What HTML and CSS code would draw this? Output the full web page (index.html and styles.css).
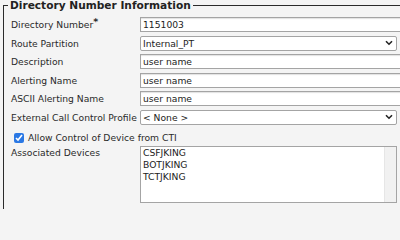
FILE: index.html
```html
<!DOCTYPE html>
<html>
<head>
<meta charset="utf-8">
<link rel="stylesheet" href="styles.css">
</head>
<body>
<fieldset class="panel">
  <legend class="panel-title">Directory Number Information</legend>
  <div class="form">
    <label class="lbl">Directory Number<sup class="req">*</sup></label>
    <input class="txt wide" type="text" value="1151003">

    <label class="lbl">Route Partition</label>
    <div class="sel-wrap">
      <select class="sel"><option>Internal_PT</option></select>
      <svg class="chev" width="8" height="6" viewBox="0 0 8 6"><path d="M1 1.2 L4 4.2 L7 1.2" fill="none" stroke="#222" stroke-width="1.6"/></svg>
    </div>

    <label class="lbl">Description</label>
    <input class="txt wide" type="text" value="user name">

    <label class="lbl">Alerting Name</label>
    <input class="txt wide" type="text" value="user name">

    <label class="lbl">ASCII Alerting Name</label>
    <input class="txt wide" type="text" value="user name">

    <label class="lbl">External Call Control Profile</label>
    <div class="sel-wrap">
      <select class="sel"><option>&lt; None &gt;</option></select>
      <svg class="chev" width="8" height="6" viewBox="0 0 8 6"><path d="M1 1.2 L4 4.2 L7 1.2" fill="none" stroke="#222" stroke-width="1.6"/></svg>
    </div>

    <label class="chk-row"><input class="chk" type="checkbox" checked>Allow Control of Device from CTI</label>

    <label class="lbl lbl-top">Associated Devices</label>
    <div class="listbox">
      <ul class="items">
        <li>CSFJKING</li>
        <li>BOTJKING</li>
        <li>TCTJKING</li>
      </ul>
      <div class="track"></div>
    </div>
  </div>
</fieldset>
</body>
</html>
```
FILE: styles.css
```css
html, body {
  margin: 0;
  padding: 0;
  background: #f4f4f4;
  overflow: hidden;
  width: 400px;
  height: 209px;
}
body {
  font-family: "DejaVu Sans", Verdana, sans-serif;
  font-size: 9.2px;
  color: #2a2a2a;
}
.panel {
  margin: 0 0 0 3px;
  padding: 0 0 0 4px;
  width: 397px;
  height: 209px;
  border: 1px solid #2b2b2b;
  border-right: none;
  border-bottom: none;
  border-radius: 0;
  box-sizing: border-box;
  overflow: hidden;
}
.panel-title {
  padding: 0 2px;
  font-weight: bold;
  font-size: 10.6px;
  line-height: 11px;
  color: #222;
}
.form {
  display: grid;
  grid-template-columns: 129px 1fr;
  row-gap: 3.6px;
  padding: 6px 0 0 3px;
  align-items: center;
}
.lbl {
  line-height: 15px;
  white-space: nowrap;
}
.req {
  font-weight: bold;
  font-size: 9.5px;
  line-height: 0;
  vertical-align: 3px;
}
.txt {
  height: 15px;
  box-sizing: border-box;
  margin: 0;
  padding: 0 2px;
  border: 1px solid #a4a4a4;
  box-shadow: inset 0 1px 1px rgba(0,0,0,0.12);
  background: #fff;
  font-family: inherit;
  font-size: 9.2px;
  color: #222;
  outline: none;
}
.wide {
  width: 270px;
}
.sel-wrap {
  position: relative;
  width: 257px;
  height: 15px;
}
.sel {
  appearance: none;
  -webkit-appearance: none;
  display: block;
  width: 100%;
  height: 15px;
  box-sizing: border-box;
  margin: 0;
  padding: 0 2px;
  border: 1px solid #a4a4a4;
  border-radius: 2px;
  background: #fff;
  font-family: inherit;
  font-size: 9.2px;
  line-height: 13px;
  color: #222;
}
.chev {
  position: absolute;
  right: 4px;
  top: 4px;
}
.chk-row {
  grid-column: 1 / 3;
  display: flex;
  align-items: center;
  gap: 4px;
  padding: 3px 0 0 3px;
  line-height: 12px;
}
.chk {
  margin: 0;
  width: 10px;
  height: 10px;
  accent-color: #2a78e4;
}
.lbl-top {
  align-self: start;
  line-height: 12px;
  padding-top: 0;
}
.listbox {
  margin-top: -1px;
  width: 257px;
  height: 57px;
  box-sizing: border-box;
  border: 1px solid #a4a4a4;
  background: #fff;
  display: flex;
}
.items {
  list-style: none;
  margin: 0;
  padding: 0 0 0 2px;
  flex: 1;
  line-height: 12px;
  color: #222;
}
.track {
  width: 11px;
  background: #f1f1f1;
  border-left: 1px solid #e6e6e6;
}
```
